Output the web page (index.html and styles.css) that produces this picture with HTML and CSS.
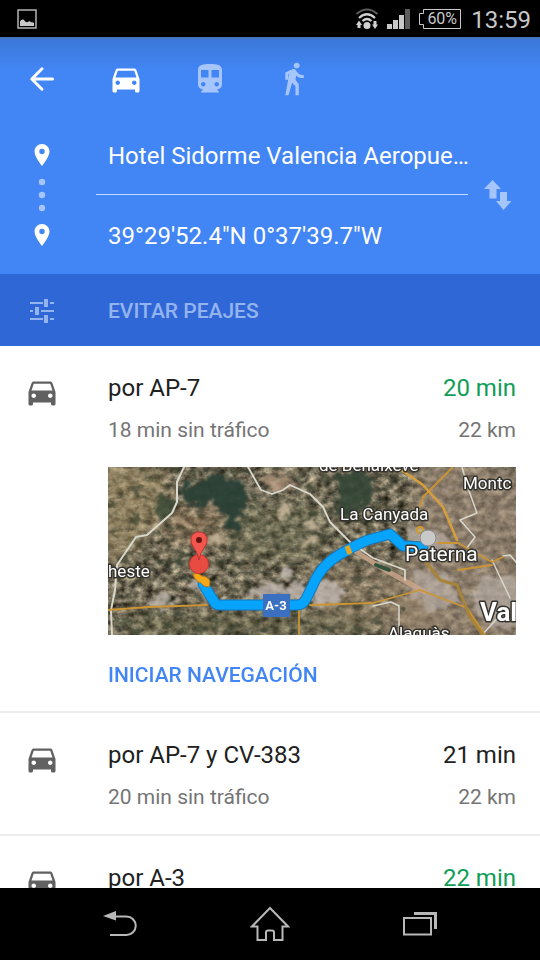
FILE: index.html
```html
<!DOCTYPE html>
<html lang="es">
<head>
<meta charset="utf-8">
<meta name="viewport" content="width=device-width, initial-scale=1">
<title>EVITAR PEAJES</title>
<link rel="stylesheet" href="styles.css">
</head>
<body>
<svg class="defs" aria-hidden="true">
  <symbol id="car" viewBox="0 0 24 24"><path d="M18.92 6.01C18.72 5.42 18.16 5 17.5 5h-11c-.66 0-1.21.42-1.42 1.01L3 12v8c0 .55.45 1 1 1h1c.55 0 1-.45 1-1v-1h12v1c0 .55.45 1 1 1h1c.55 0 1-.45 1-1v-8l-2.08-5.99zM6.500 16c-.83 0-1.500-.67-1.500-1.500S5.670 13 6.500 13s1.500.67 1.500 1.500S7.330 16 6.500 16zm11 0c-.83 0-1.500-.67-1.500-1.500s.67-1.500 1.500-1.500 1.500.67 1.500 1.500-.67 1.500-1.500 1.500zM5 11l1.500-4.500h11L19 11H5z"/></symbol>
</svg>
<div class="screen">
  <div class="status">
    <svg class="status-shot" width="20" height="20" viewBox="0 0 20 20"><path d="M1 1h18v18H1z" fill="none" stroke="#b4b4b4" stroke-width="1.500"/><path d="M3 17v-4.500q1-2.500 3.500-2l2 2.300q2 1 3-.3 1.500-.5 2.500.8 2-.5 3 .7v3z" fill="#c8c8c8"/></svg>
    <div class="status-right">
      <svg width="24" height="22" viewBox="0 0 24 22" fill="none"><path d="M1.500 6Q12-3 22.500 6" stroke="#5c5c5c" stroke-width="2"/><path d="M4 10q8-7.500 16 0M7.500 13q4.500-4 9 0" stroke="#d0d0d0" stroke-width="2.200"/><circle cx="12" cy="17.500" r="3.500" fill="#d0d0d0"/><path d="M4 12.500l3 4.500H5.500v3h-3v-3H1zM18.500 13h3v3.500H23l-3 4.500-3-4.500h1.500z" fill="#d0d0d0"/></svg>
      <svg width="24" height="20" viewBox="0 0 24 20"><path d="M0 15h5v5H0zM6 11h5v9H6zM12 6h5v14h-5z" fill="#c8c8c8"/><path d="M18 0h5v20h-5z" fill="#5c5c5c"/></svg>
      <span class="battery"><svg width="42" height="20" viewBox="0 0 42 20"><path d="M4.500.5h37v19h-37v-4h-4v-11h4z" fill="none" stroke="#c8c8c8"/></svg><span class="battery-text">60%</span></span>
      <span class="clock">13:59</span>
    </div>
  </div>

  <header class="header">
    <nav class="tabs">
      <button class="tab active" aria-label="Atrás"><svg class="icon" viewBox="0 0 24 24"><path d="M5.200 12L12 5.200M5.200 12l6.800 6.800M5.200 12H19" fill="none" stroke="currentColor" stroke-width="2" stroke-linecap="round"/></svg></button>
      <button class="tab active" aria-label="Coche"><svg class="icon"><use href="#car"/></svg></button>
      <button class="tab" aria-label="Transporte público"><svg class="icon" viewBox="0 0 24 24"><path d="M12 2c-4.420 0-8 .5-8 4v9.500C4 17.430 5.570 19 7.500 19L6 20.500v.5h12v-.5L16.500 19c1.930 0 3.500-1.570 3.500-3.500V6c0-3.500-3.580-4-8-4zM7.500 17c-.83 0-1.500-.67-1.500-1.500S6.670 14 7.500 14s1.500.67 1.500 1.500S8.330 17 7.500 17zm3.500-6H6V6h5v5zm5.500 6c-.83 0-1.500-.67-1.500-1.500s.67-1.500 1.500-1.500 1.500.67 1.500 1.500-.67 1.500-1.500 1.500zm1.500-6h-5V6h5v5z"/></svg></button>
      <button class="tab" aria-label="A pie"><svg class="icon" viewBox="0 0 24 24"><path d="M13.800 4.900c1.100 0 2-.8 2-1.900s-.9-1.900-2-1.900-2 .8-2 1.900.9 1.900 2 1.900zM8.800 8.700L6.200 22.800h2.100l2.500-8.300 2.200 2.500v5.800h2.200v-7.300l-2.200-3 .5-2.900C14.500 10.800 16 11.300 18.500 11.300v-2c-1.900 0-3.400-.6-4.200-1.700l-1-1.300c-.4-.6-1-.9-1.700-.9-.3 0-.5.1-.8.1L6.200 7.600v4.900h2V9z"/></svg></button>
    </nav>
    <div class="trip">
      <svg class="waypoints" width="16" height="102" viewBox="0 0 16 102">
        <path d="M8 0C4 0 .5 3.300.5 7.500.5 13 8 22 8 22s7.500-9 7.500-14.500C15.500 3.300 12 0 8 0zm0 10.200a2.700 2.700 0 1 1 0-5.400 2.700 2.700 0 0 1 0 5.400zM8 80C4 80 .5 83.300.5 87.500.5 93 8 102 8 102s7.500-9 7.500-14.500C15.500 83.300 12 80 8 80zm0 10.200a2.700 2.700 0 1 1 0-5.400 2.700 2.700 0 0 1 0 5.400z" fill="#fff"/>
        <g fill="#a5c5fb"><circle cx="8" cy="38" r="3.200"/><circle cx="8" cy="51" r="3.200"/><circle cx="8" cy="64" r="3.200"/></g>
      </svg>
      <div class="fields">
        <input class="field" type="text" aria-label="Origen" value="Hotel Sidorme Valencia Aeropue…" readonly>
        <input class="field" type="text" aria-label="Destino" value="39°29'52.4&quot;N 0°37'39.7&quot;W" readonly>
      </div>
      <button class="swap" aria-label="Invertir"><svg width="28" height="30" viewBox="0 0 28 30"><path d="M8.500 0L17 9h-4.500v9.500h-7V9H0zM16 12h7v9h4.500L19.500 30 12 21h4z"/></svg></button>
    </div>
  </header>

  <button class="options">
    <span class="options-icon"><svg width="24" height="24" viewBox="0 0 24 24"><path d="M0 3h13v2H0zM14 0h4v8h-4zM20 3h4v2h-4zM0 11h3v2H0zM5 8h4v8H5zM11 11h13v2H11zM0 19h13v2H0zM14 16h4v8h-4zM20 19h4v2h-4z"/></svg></span>
    <span>EVITAR PEAJES</span>
  </button>

  <main class="routes">
    <article class="route">
      <svg class="icon route-icon"><use href="#car"/></svg>
      <div class="route-body">
        <div class="row title"><span>por AP-7</span><span class="fast">20 min</span></div>
        <div class="row detail"><span>18 min sin tráfico</span><span>22 km</span></div>
        <svg class="map" viewBox="0 0 408 168" role="img">
          <defs>
            <filter id="ground" x="0" y="0" width="100%" height="100%" color-interpolation-filters="sRGB">
              <feTurbulence type="fractalNoise" baseFrequency=".11 .14" numOctaves="5" seed="8"/>
              <feColorMatrix values=".9 .25 0 0 -.12  .85 .2 0 0 -.1  .75 .15 0 0 -.1  0 0 0 0 1"/>
            </filter>
            <filter id="rough" x="-20%" y="-20%" width="140%" height="140%" color-interpolation-filters="sRGB">
              <feTurbulence type="fractalNoise" baseFrequency=".12" numOctaves="4" seed="3"/>
              <feDisplacementMap in="SourceGraphic" scale="20" xChannelSelector="R" yChannelSelector="G"/>
              <feGaussianBlur stdDeviation=".8"/>
            </filter>
            <filter id="specks" x="0" y="0" width="100%" height="100%" color-interpolation-filters="sRGB">
              <feTurbulence type="fractalNoise" baseFrequency=".09 .12" numOctaves="5" seed="21"/>
              <feColorMatrix values="0 0 0 0 .2  0 0 0 0 .24  0 0 0 0 .17  5 0 0 0 -2.700"/>
            </filter>
            <filter id="soft" x="-30%" y="-30%" width="160%" height="160%"><feGaussianBlur stdDeviation="9"/></filter>
          </defs>
          <rect width="408" height="168" filter="url(#ground)"/>
          <g filter="url(#soft)">
            <path d="M-10-5h65l5 50-35 40-35 15z" fill="#b09a6c" opacity=".45"/>
            <path d="M60 40h55v35H60z" fill="#a07c58" opacity=".4"/>
            <path d="M310-5h108v180H280l20-80z" fill="#9c8878" opacity=".55"/>
            <path d="M205 95l90 5 40 60H205z" fill="#a58c70" opacity=".4"/>
            <path d="M125 35h90v60h-95z" fill="#6a6c4c" opacity=".35"/>
            <path d="M20 148h240v20H20z" fill="#5c5f42" opacity=".45"/>
          </g>
          <rect width="300" height="168" filter="url(#specks)" opacity=".55"/>
          <g filter="url(#rough)">
            <path d="M72 18l24-4 8-7 24 3 12 14-5 14-5 24-12-1-5-24-12-2-12 6-12-8z" fill="#2a4036" opacity=".95"/>
            <path d="M228 8l24-5 14 14-7 20-18 16-13-8z" fill="#344636" opacity=".9"/>
            <path d="M43 37l19-8 8 9-14 17zM80 86l16 12-10 10zM62 84l12 10-6 8zM268 46l16-5 8 7-11 6z" fill="#3a4835" opacity=".8"/>
            <path d="M155 12l16-6 14 7-8 11-18-1z" fill="#b79880" opacity=".75"/>
            <path d="M169 34l9 3 3 14-9-2zM193 53l18-4-3 9-14 1zM192 76l13-8 5 6-15 5zM104 65l13 5-5 7-10-3z" fill="#cdbb9f" opacity=".85"/>
          </g>
          <g filter="url(#rough)" fill="#c3bab4">
            <path d="M45 130l16-5 6 12-22 4zM82 112l16 2 2 10-16-2z" opacity=".7"/>
            <path d="M142 118l50-2 14 8-10 9-52-3zM204 118l22-8 12 14-12 14-22 2zM174 104l10 1-1 7-10-1z" opacity=".75"/>
            <path d="M298 58l30 6 22 14-10 9-35-8zM372 108l46 6v50l-40-6-14-26zM305 105l35 3 12 26-30 12-20-22z" opacity=".55"/>
          </g>
          <g fill="none" stroke-linejoin="round" stroke-linecap="round">
            <path d="M247 84l30 19 40 22" stroke="#c9a58a" stroke-width="5" opacity=".85"/>
            <path d="M268 98l13 5" stroke="#31523d" stroke-width="4"/>
            <g stroke="#d9d8cd" stroke-width="2">
              <path d="M76 0l-7 15v20l-5 11-25 22-11 2L9 98l-2 25-4 20 1 25"/>
              <path d="M140 0l9 16 4 7 11 4 11-4 7-5 20 9 13 13 7 15 20 20 23 16 32 12v10" stroke-width="1.800"/>
              <path d="M354 0l6 21 9 25-17 7 15 17-8 11M384 93l18 38M265 139l18-4 8 4v29M395 89l7-1 6 7M374 168l20-22" stroke-width="1.500"/>
            </g>
            <g stroke="#cb9434" stroke-width="1.800">
              <path d="M0 143l40-3 59-2M202 138l63-2 47-13 47 18 18 27"/>
              <path d="M344 1l-29 29-3 10M330 76h20l34 19 11-5M350 103l34-5M191 144v23"/>
            </g>
            <path d="M292 2l23 16 20 22 14 33" stroke="#d79e3c" stroke-width="2.500"/>
            <path d="M318 95l14 18 17 5 13 32 13 18" stroke="#a8843a" stroke-width="3"/>
            <path d="M95 117l12 19q1 2 5 2h77q6 0 9-6l7-14q5-12 13-20 8-8 20-14 12-7 22-11l22-6 13 12 20 1" stroke="#1479bd" stroke-width="11"/>
            <path d="M95 117l12 19q1 2 5 2h77q6 0 9-6l7-14q5-12 13-20 8-8 20-14 12-7 22-11l22-6 13 12 20 1" stroke="#07a4fb" stroke-width="9"/>
            <path d="M239 79l3 8" stroke="#e2a422" stroke-width="5" stroke-linecap="butt"/>
          </g>
          <path d="M85 107q5-2 9 2 7 1 8 6l-1 5q-6 0-8-4-6-2-8-9z" fill="#f4aa18" stroke="#b97a16"/>
          <circle cx="312" cy="63" r="3" fill="none" stroke="#d29b2b" stroke-width="2"/>
          <path d="M314 65l4 5" stroke="#1888ce" stroke-width="4"/>
          <circle cx="91" cy="97" r="9.500" fill="#e84b42" stroke="#c9382f"/>
          <path d="M91 93q-1-7-5-12-4-5-3-10a8.300 8.300 0 0 1 16 0q1 5-3 10-4 5-5 12z" fill="#f2564e" stroke="#bb3530"/>
          <circle cx="91" cy="73" r="3" fill="#651410"/>
          <circle cx="320" cy="71" r="8" fill="#c9c9c9" stroke="#8c8c8c"/>
          <path d="M155 127h27v23h-27z" fill="#3b6fc0"/>
          <g class="map-labels">
            <text x="168" y="143" class="badge">A-3</text>
            <g class="town">
              <text x="0" y="110">heste</text>
              <text x="211" y="4">de Benaixeve</text>
              <text x="232" y="53">La Canyada</text>
              <text x="355" y="22">Montc</text>
              <text x="280" y="172">Alaquàs</text>
            </g>
            <text x="297" y="94" class="city">Paterna</text>
            <text x="372" y="154" class="capital">Val</text>
          </g>
        </svg>
        <button class="start">INICIAR NAVEGACIÓN</button>
      </div>
    </article>
    <article class="route">
      <svg class="icon route-icon"><use href="#car"/></svg>
      <div class="route-body">
        <div class="row title"><span>por AP-7 y CV-383</span><span>21 min</span></div>
        <div class="row detail"><span>20 min sin tráfico</span><span>22 km</span></div>
      </div>
    </article>
    <article class="route">
      <svg class="icon route-icon"><use href="#car"/></svg>
      <div class="route-body">
        <div class="row title"><span>por A-3</span><span class="fast">22 min</span></div>
      </div>
    </article>
  </main>

  <nav class="system">
    <button aria-label="Volver"><svg width="34" height="26" viewBox="0 0 34 26"><path d="M13 5.500h10.500a9 9 0 0 1 0 18.500H7" fill="none" stroke="#b8b8b8" stroke-width="2"/><path d="M0 5l13-5v9.500z" fill="#b8b8b8"/></svg></button>
    <button aria-label="Inicio"><svg width="40" height="36" viewBox="0 0 40 36"><path d="M20 2L2 20.500h5.500V34H16v-7.500q0-2 2-2h4q2 0 2 2V34h8.500V20.500H38z" fill="none" stroke="#b8b8b8" stroke-width="2"/></svg></button>
    <button aria-label="Recientes"><svg width="34" height="24" viewBox="0 0 34 24"><path d="M1 6h27v16.500H1z" fill="none" stroke="#b8b8b8" stroke-width="2"/><path d="M11 1.500h21.500V17" fill="none" stroke="#b8b8b8" stroke-width="3"/></svg></button>
  </nav>
</div>
</body>
</html>
```

FILE: styles.css
```css
* {
  box-sizing: border-box;
}

body {
  margin: 0;
  font-family: Roboto, "Liberation Sans", sans-serif;
  background: #fff;
}

button,
input {
  margin: 0;
  padding: 0;
  border: 0;
  border-radius: 0;
  background: none;
  color: inherit;
  font: inherit;
  outline: none;
}

button {
  cursor: pointer;
}

svg {
  display: block;
  flex: none;
}

.defs {
  position: absolute;
  width: 0;
  height: 0;
}

.icon {
  width: 36px;
  height: 36px;
  fill: currentColor;
}

.screen {
  display: flex;
  flex-direction: column;
  height: 100vh;
}

/* Status bar */
.status {
  display: flex;
  flex: none;
  align-items: center;
  justify-content: space-between;
  height: 37px;
  padding: 0 9px 0 17px;
  background: #000;
  color: #c8c8c8;
}

.status-right {
  display: flex;
  align-items: center;
  gap: 8px;
}

.battery {
  display: grid;
  align-items: center;
}

.battery > * {
  grid-area: 1 / 1;
}

.battery-text {
  padding-left: 4px;
  font-size: 16px;
  line-height: 20px;
  text-align: center;
}

.clock {
  padding: 2px 0 0 2px;
  font-size: 24px;
  line-height: 32px;
}

/* Directions header */
.header {
  flex: none;
  background: linear-gradient(#4a72ae, #3b78d8 3px, #4285f4 32px);
  color: #fff;
}

.tabs {
  display: flex;
  height: 78px;
  padding-top: 6px;
}

.tab {
  display: flex;
  align-items: center;
  justify-content: center;
  width: 84px;
  color: #a5c5fb;
}

.tab.active {
  color: #fff;
}

.trip {
  display: grid;
  grid-template-columns: 84px 1fr 72px;
  align-items: center;
}

.waypoints {
  justify-self: center;
}

.fields {
  display: flex;
  flex-direction: column;
  margin-left: 12px;
}

.field {
  width: 100%;
  height: 79px;
  padding: 2px 0 0 12px;
  font-size: 24px;
}

.field:first-child {
  height: 80px;
  border-bottom: 1px solid #c6dcfc;
}

.swap {
  display: flex;
  justify-content: center;
  padding-right: 12px;
  fill: #a5c5fb;
}

.options {
  display: grid;
  flex: none;
  grid-template-columns: 84px 1fr;
  gap: 24px;
  align-items: center;
  height: 72px;
  padding-top: 2px;
  background: #3067d6;
  color: #94b4f0;
  font-size: 21px;
  font-weight: 500;
  text-align: left;
}

.options-icon {
  display: flex;
  justify-content: center;
  fill: currentColor;
}

/* Route list */
.routes {
  flex: 1;
  min-height: 0;
  overflow-y: auto;
  scrollbar-width: none;
}

.route {
  display: grid;
  grid-template-columns: 84px 1fr;
  gap: 24px;
  padding: 24px 24px 0 0;
  border-bottom: 2px solid #ececec;
  color: #212121;
}

.route-icon {
  justify-self: center;
  margin-top: 4px;
  color: #616161;
}

.row {
  display: flex;
  justify-content: space-between;
  line-height: 36px;
}

.title {
  font-size: 24px;
}

.detail {
  padding: 6px 0 19px;
  color: #757575;
  font-size: 21px;
}

.fast {
  color: #0f9d58;
}

.map {
  width: 100%;
  height: auto;
}

.map-labels {
  fill: #fff;
  stroke: #33322c;
  stroke-width: 3px;
  stroke-linejoin: round;
  paint-order: stroke;
}

.town {
  font-size: 17px;
}

.city {
  font-size: 21px;
}

.capital {
  font-size: 26px;
  font-weight: 700;
}

.badge {
  stroke: none;
  font-size: 13px;
  font-weight: 700;
  text-anchor: middle;
}

.start {
  height: 76px;
  padding-top: 4px;
  color: #4285f4;
  font-size: 21px;
  font-weight: 500;
}

/* System navigation */
.system {
  display: grid;
  flex: none;
  grid-template-columns: repeat(3, 1fr);
  height: 72px;
  padding: 0 45px;
  background: #000;
}

.system button {
  display: flex;
  align-items: center;
  justify-content: center;
}
```
